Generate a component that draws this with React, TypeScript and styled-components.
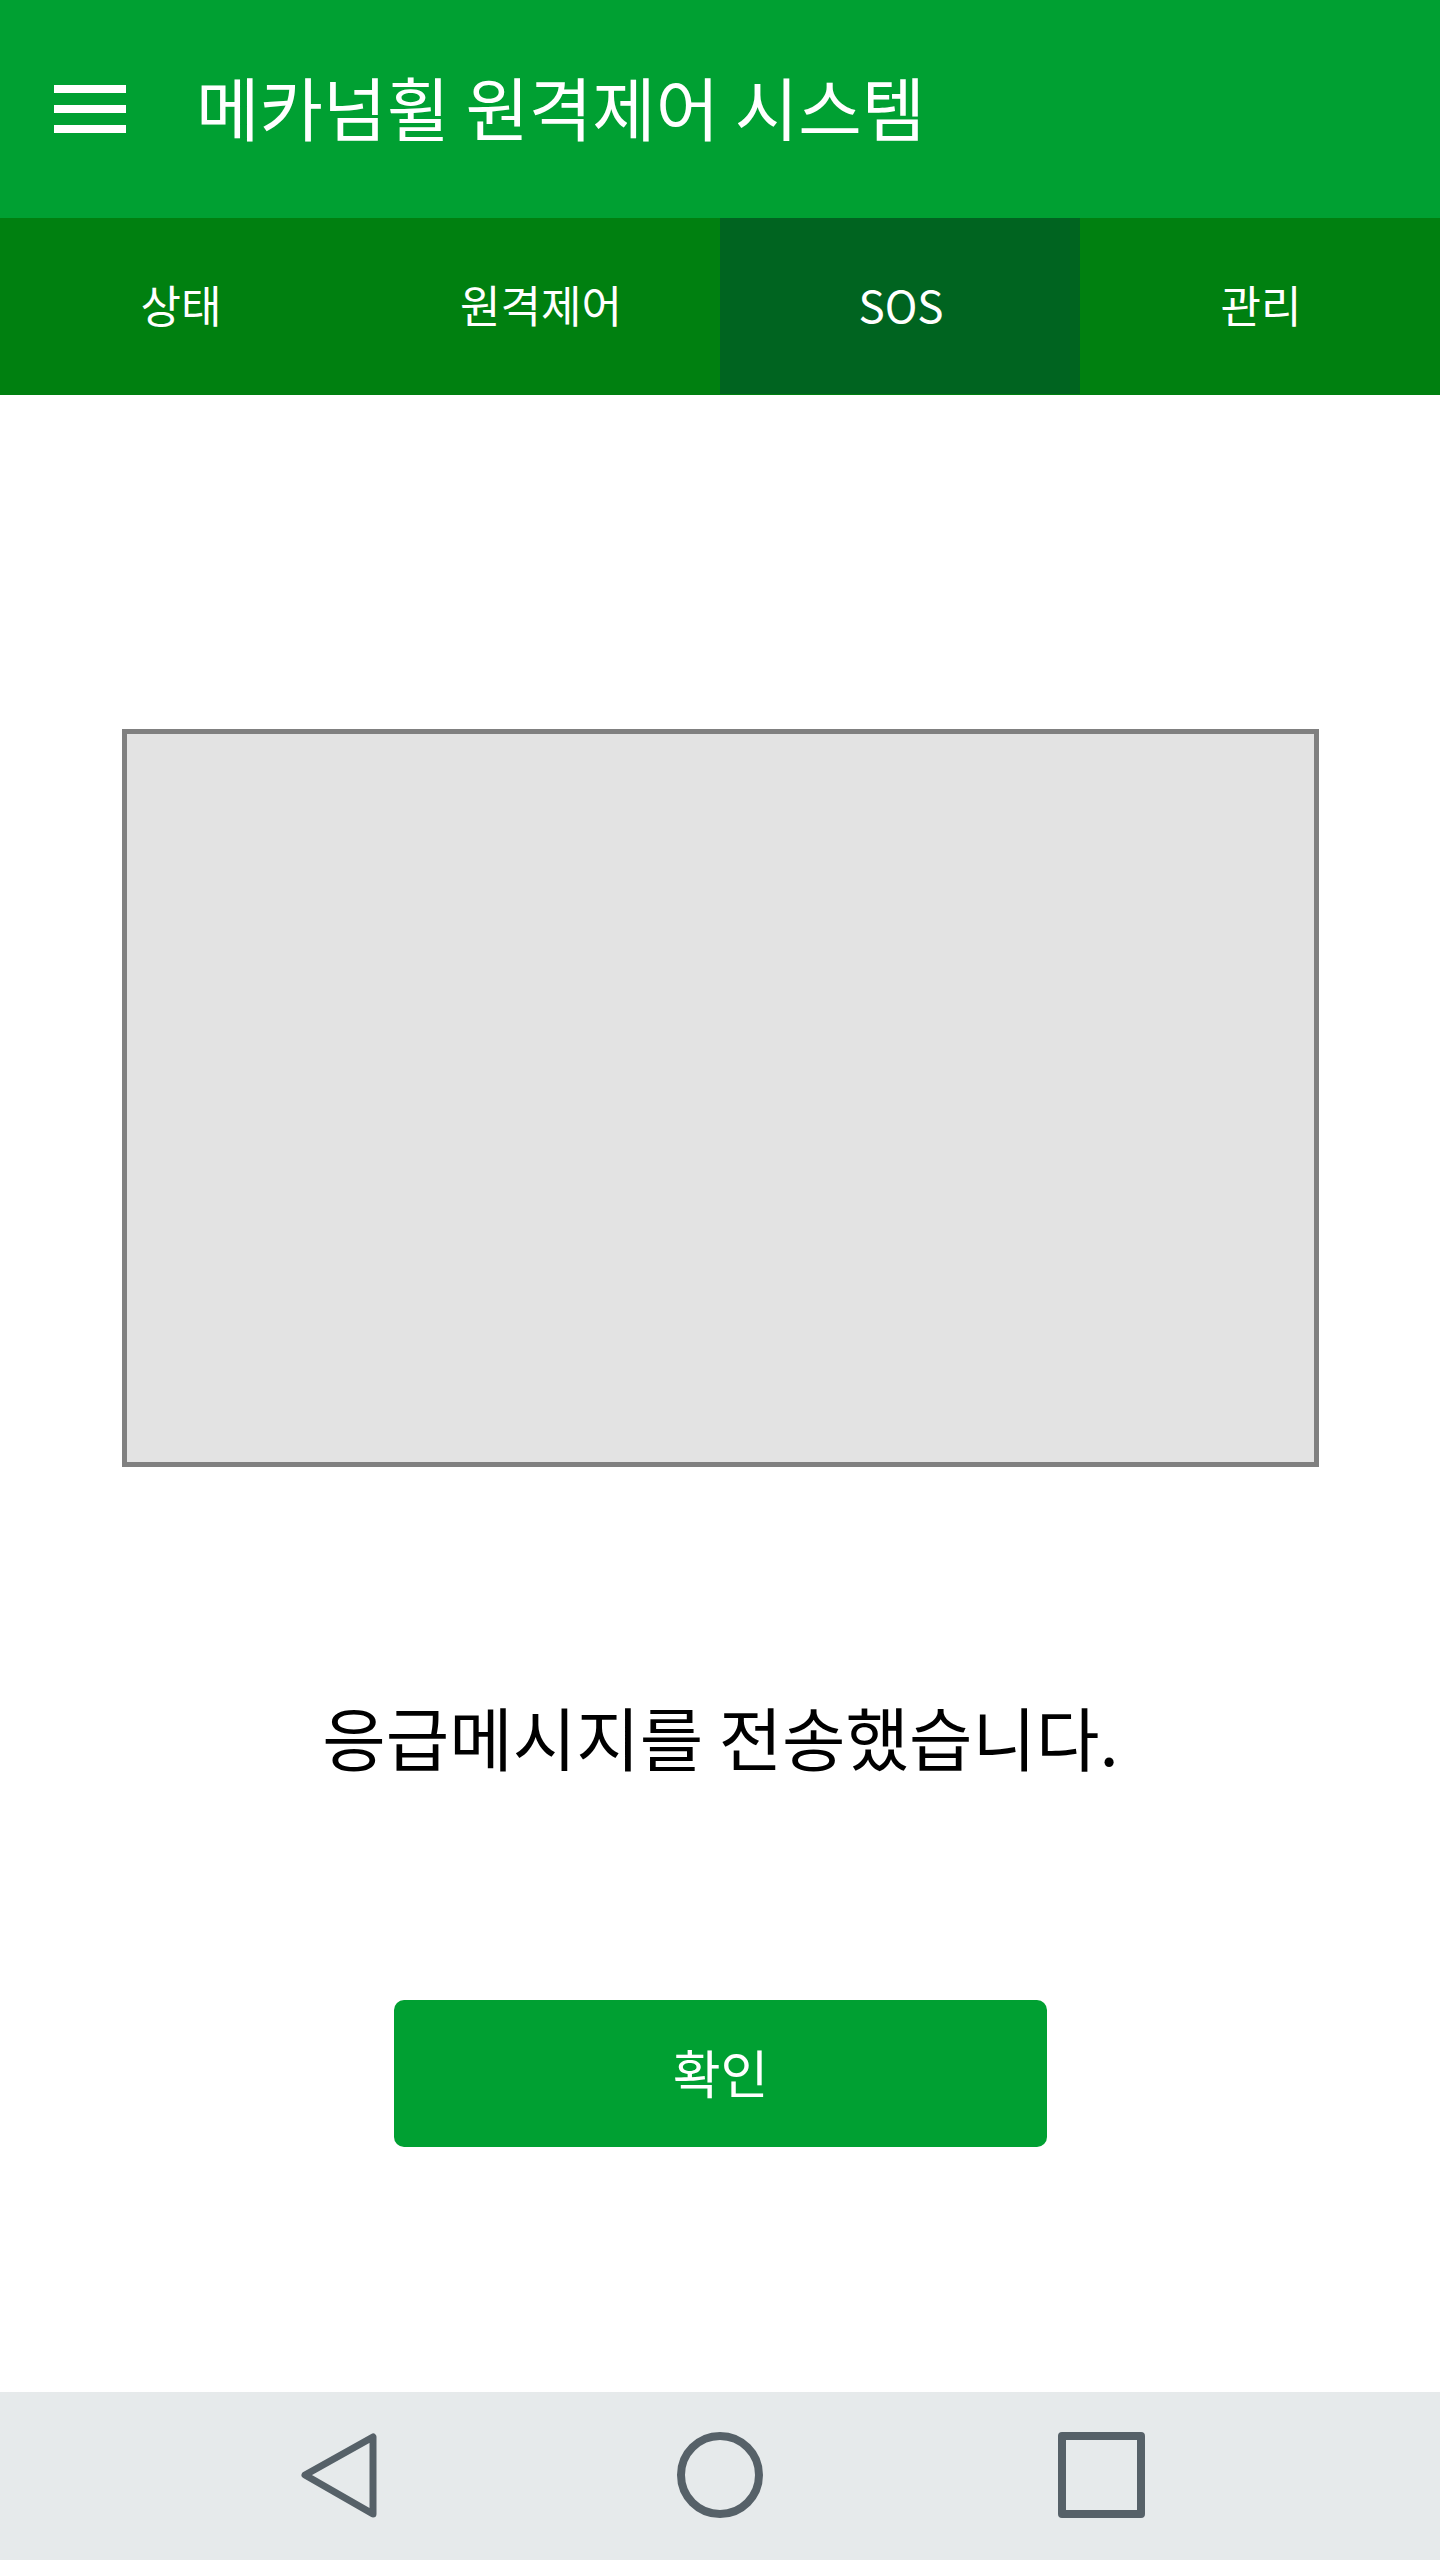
import React, { useState } from "react";
import styled, { createGlobalStyle } from "styled-components";

const GlobalStyle = createGlobalStyle`
  *, *::before, *::after { box-sizing: border-box; }
  body {
    margin: 0;
    background: #ffffff;
    color: #000000;
    font-family: "Noto Sans CJK KR", sans-serif;
  }
  button { font-family: inherit; border: 0; padding: 0; cursor: pointer; }
`;

const Screen = styled.div`
  min-height: 100vh;
  display: flex;
  flex-direction: column;
`;

const AppBar = styled.header`
  display: flex;
  align-items: center;
  gap: 70px;
  height: 218px;
  padding: 0 54px;
  background: #00a032;
  color: #ffffff;
`;

const MenuButton = styled.button`
  display: flex;
  flex-direction: column;
  gap: 12px;
  width: 72px;
  background: transparent;
`;

const MenuLine = styled.span`
  height: 8px;
  width: 100%;
  background: #ffffff;
`;

const Title = styled.h1`
  margin: 0;
  padding-bottom: 6px;
  font-size: 69px;
  line-height: 100px;
  font-weight: 400;
`;

const Tabs = styled.nav`
  display: grid;
  grid-template-columns: repeat(4, 1fr);
  height: 177px;
  background: #008010;
  border-bottom: 1px solid #008010;
`;

const Tab = styled.button<{ $active: boolean }>`
  padding: 0 0 4px 2px;
  background: ${(p) => (p.$active ? "#006420" : "transparent")};
  color: #ffffff;
  font-size: 44px;
  line-height: 64px;
`;

const Content = styled.main`
  flex: 1;
  display: flex;
  flex-direction: column;
  align-items: center;
  padding: 334px 121px 0 122px;
`;

const Preview = styled.section`
  width: 100%;
  height: 738px;
  border: 5px solid #808080;
  background: #e3e3e3;
`;

const Message = styled.p`
  margin: 219px 0 214px;
  font-size: 69px;
  line-height: 100px;
`;

const ConfirmButton = styled.button`
  width: 653px;
  max-width: 100%;
  height: 147px;
  padding-bottom: 4px;
  border-radius: 10px;
  background: #00a032;
  color: #ffffff;
  font-size: 52px;
  line-height: 76px;
`;

const SystemBar = styled.footer`
  display: flex;
  justify-content: center;
  align-items: center;
  gap: 293px;
  height: 168px;
  background: #e6eaeb;
`;

const SystemButton = styled.button`
  display: flex;
  background: transparent;
`;

const SystemIcon = styled.svg`
  display: block;
  width: 88px;
  height: 88px;
  fill: none;
  stroke: #566168;
  stroke-width: 8;
  stroke-linejoin: round;
`;

const TABS = ["상태", "원격제어", "SOS", "관리"];

export default function App() {
  const [active, setActive] = useState("SOS");

  return (
    <>
      <GlobalStyle />
      <Screen>
        <AppBar>
          <MenuButton aria-label="메뉴">
            <MenuLine />
            <MenuLine />
            <MenuLine />
          </MenuButton>
          <Title>메카넘휠 원격제어 시스템</Title>
        </AppBar>
        <Tabs>
          {TABS.map((tab) => (
            <Tab key={tab} $active={tab === active} onClick={() => setActive(tab)}>
              {tab}
            </Tab>
          ))}
        </Tabs>
        <Content>
          <Preview />
          <Message>응급메시지를 전송했습니다.</Message>
          <ConfirmButton>확인</ConfirmButton>
        </Content>
        <SystemBar>
          <SystemButton aria-label="뒤로">
            <SystemIcon viewBox="0 0 88 88">
              <path d="M78 5V82L10 43Z" strokeWidth="7" />
            </SystemIcon>
          </SystemButton>
          <SystemButton aria-label="홈">
            <SystemIcon viewBox="0 0 88 88">
              <circle cx="44" cy="43" r="39" />
            </SystemIcon>
          </SystemButton>
          <SystemButton aria-label="최근 앱">
            <SystemIcon viewBox="0 0 88 88">
              <rect x="5" y="4" width="79" height="78" />
            </SystemIcon>
          </SystemButton>
        </SystemBar>
      </Screen>
    </>
  );
}
